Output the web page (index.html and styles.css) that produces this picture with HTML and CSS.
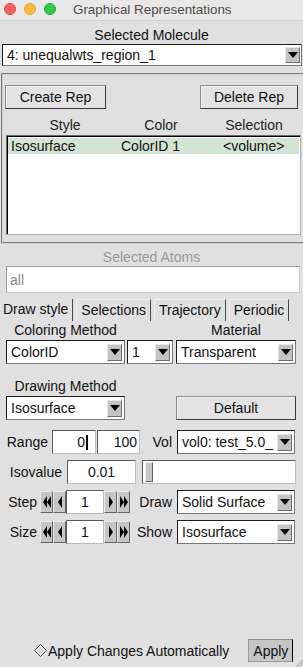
FILE: index.html
```html
<!DOCTYPE html>
<html lang="en">
<head>
    <meta charset="UTF-8">
    <meta name="viewport" content="width=device-width, initial-scale=1.0">
    <title>Graphical Representations</title>
    <link rel="stylesheet" href="styles.css">
</head>
<body>
    <div class="titlebar">
        <span class="light red"></span>
        <span class="light yellow"></span>
        <span class="light green"></span>
        <span class="title">Graphical Representations</span>
    </div>

    <div class="label mol-label">Selected Molecule</div>
    <div class="menu mol-menu">
        <span class="menu-text">4: unequalwts_region_1</span>
        <span class="arrow"><svg width="10" height="6" viewBox="0 0 10 6"><path d="M0 0h10L5 6z"/></svg></span>
    </div>

    <div class="reps">
        <div class="rep-buttons">
            <div class="btn create-btn">Create Rep</div>
            <div class="btn delete-btn">Delete Rep</div>
        </div>
        <div class="rep-head">
            <span>Style</span>
            <span>Color</span>
            <span class="col-sel">Selection</span>
        </div>
        <div class="rep-list">
            <div class="rep-row selected">
                <span>Isosurface</span>
                <span>ColorID 1</span>
                <span class="col-sel">&lt;volume&gt;</span>
            </div>
        </div>
    </div>

    <div class="label dim atoms-label">Selected Atoms</div>
    <div class="entry atoms-entry">all</div>

    <div class="tabs">
        <div class="tab active">Draw style</div>
        <div class="tab">Selections</div>
        <div class="tab">Trajectory</div>
        <div class="tab">Periodic</div>
    </div>

    <div class="draw-style">
        <div class="grid-row labels-row">
            <span class="col-a">Coloring Method</span>
            <span class="col-b"></span>
            <span class="col-c">Material</span>
        </div>
        <div class="grid-row">
            <div class="menu col-a"><span class="menu-text">ColorID</span><span class="arrow"><svg width="10" height="6" viewBox="0 0 10 6"><path d="M0 0h10L5 6z"/></svg></span></div>
            <div class="menu col-b"><span class="menu-text">1</span><span class="arrow"><svg width="10" height="6" viewBox="0 0 10 6"><path d="M0 0h10L5 6z"/></svg></span></div>
            <div class="menu col-c"><span class="menu-text">Transparent</span><span class="arrow"><svg width="10" height="6" viewBox="0 0 10 6"><path d="M0 0h10L5 6z"/></svg></span></div>
        </div>
        <div class="grid-row labels-row method-label">
            <span class="col-a">Drawing Method</span>
        </div>
        <div class="grid-row">
            <div class="menu col-a"><span class="menu-text">Isosurface</span><span class="arrow"><svg width="10" height="6" viewBox="0 0 10 6"><path d="M0 0h10L5 6z"/></svg></span></div>
            <span class="col-b"></span>
            <div class="btn col-c default-btn">Default</div>
        </div>

        <div class="param-row range-row">
            <span class="lbl range-lbl">Range</span>
            <div class="entry range-min">0<span class="cursor"></span></div>
            <div class="entry range-max">100</div>
            <div class="right-part">
                <span class="side-lbl">Vol</span>
                <div class="menu side-menu"><span class="menu-text">vol0: test_5.0_</span><span class="arrow"><svg width="10" height="6" viewBox="0 0 10 6"><path d="M0 0h10L5 6z"/></svg></span></div>
            </div>
        </div>
        <div class="param-row iso-row">
            <span class="lbl iso-lbl">Isovalue</span>
            <div class="entry iso-entry">0.01</div>
            <div class="slider"><span class="handle"></span></div>
        </div>
        <div class="param-row step-row">
            <span class="lbl step-lbl">Step</span>
            <div class="spin">
                <span class="spin-btn"><svg width="8" height="12" viewBox="0 0 8 12"><path d="M4 0v12L0 6z M8 0v12L4 6z"/></svg></span>
                <span class="spin-btn"><svg width="4" height="12" viewBox="0 0 4 12"><path d="M4 0v12L0 6z"/></svg></span>
                <div class="entry spin-entry">1</div>
                <span class="spin-btn"><svg width="4" height="12" viewBox="0 0 4 12"><path d="M0 0v12L4 6z"/></svg></span>
                <span class="spin-btn"><svg width="8" height="12" viewBox="0 0 8 12"><path d="M0 0v12L4 6z M4 0v12L8 6z"/></svg></span>
            </div>
            <div class="right-part">
                <span class="side-lbl">Draw</span>
                <div class="menu side-menu"><span class="menu-text">Solid Surface</span><span class="arrow"><svg width="10" height="6" viewBox="0 0 10 6"><path d="M0 0h10L5 6z"/></svg></span></div>
            </div>
        </div>
        <div class="param-row size-row">
            <span class="lbl step-lbl">Size</span>
            <div class="spin">
                <span class="spin-btn"><svg width="8" height="12" viewBox="0 0 8 12"><path d="M4 0v12L0 6z M8 0v12L4 6z"/></svg></span>
                <span class="spin-btn"><svg width="4" height="12" viewBox="0 0 4 12"><path d="M4 0v12L0 6z"/></svg></span>
                <div class="entry spin-entry">1</div>
                <span class="spin-btn"><svg width="4" height="12" viewBox="0 0 4 12"><path d="M0 0v12L4 6z"/></svg></span>
                <span class="spin-btn"><svg width="8" height="12" viewBox="0 0 8 12"><path d="M0 0v12L4 6z M4 0v12L8 6z"/></svg></span>
            </div>
            <div class="right-part">
                <span class="side-lbl">Show</span>
                <div class="menu side-menu"><span class="menu-text">Isosurface</span><span class="arrow"><svg width="10" height="6" viewBox="0 0 10 6"><path d="M0 0h10L5 6z"/></svg></span></div>
            </div>
        </div>
    </div>

    <div class="footer">
        <span class="radio"><svg width="13" height="13" viewBox="0 0 13 13"><path d="M6.5 0.5L12.5 6.5L6.5 12.5L0.5 6.5z" fill="#f6f6f6" stroke="#3a3a3a"/><path d="M6.5 3L10 6.5L6.5 10L3 6.5z" fill="#d8d8d8"/></svg></span>
        <span class="auto-text">Apply Changes Automatically</span>
        <div class="btn apply-btn">Apply</div>
    </div>
    <svg class="grip" width="8" height="8" viewBox="0 0 8 8"><path d="M8 1L1 8M8 4L4 8" stroke="#999" fill="none"/></svg>
</body>
</html>
```

FILE: styles.css
```css
body {
    margin: 0;
    width: 303px;
    height: 667px;
    overflow: hidden;
    position: relative;
    display: flex;
    flex-direction: column;
    background-color: #e0e0e0;
    font-family: "Liberation Sans", Arial, sans-serif;
    font-size: 14px;
    color: #111;
}
.titlebar {
    height: 20px;
    flex-shrink: 0;
    display: flex;
    align-items: center;
    padding-left: 4px;
    background-color: #e8e8e8;
    border-bottom: 1px solid #d2d2d2;
}
.light {
    width: 12px;
    height: 12px;
    box-sizing: border-box;
    border-radius: 50%;
    margin-right: 8px;
    margin-top: -2px;
}
.red {
    background-color: #fc605c;
    border: 1px solid #de4a45;
}
.yellow {
    background-color: #fdbc40;
    border: 1px solid #dea236;
}
.green {
    background-color: #34c84a;
    border: 1px solid #27aa35;
}
.title {
    margin-left: 9px;
    margin-top: -2px;
    font-size: 13.4px;
    color: #4d4d4d;
}
.label {
    text-align: center;
    line-height: 16px;
}
.dim {
    color: #999;
}
.mol-label {
    margin-top: 6px;
}

/* option menus */
.menu {
    display: flex;
    align-items: center;
    height: 24px;
    box-sizing: border-box;
    background-color: #fff;
    border: 1px solid #1c1c1c;
    border-right-color: #777;
    border-bottom-color: #777;
}
.menu-text {
    flex: 1;
    padding-left: 4px;
    white-space: nowrap;
    overflow: hidden;
}
.arrow {
    width: 15px;
    height: 17px;
    box-sizing: border-box;
    margin-right: 2px;
    display: flex;
    align-items: center;
    justify-content: center;
    background-color: #c3c3c3;
    border: 1px solid #e6e6e6;
    border-right-color: #6e6e6e;
    border-bottom-color: #6e6e6e;
}
.arrow svg {
    fill: #000;
}
.mol-menu {
    margin: 1px 1px 0 2px;
    height: 22px;
}
.mol-menu .arrow {
    height: 16px;
    margin-right: 1px;
}

/* buttons */
.btn {
    box-sizing: border-box;
    height: 24px;
    display: flex;
    align-items: center;
    justify-content: center;
    background-color: #e3e3e3;
    border: 1px solid #8c8c8c;
    border-right-color: #3a3a3a;
    border-bottom-color: #3a3a3a;
    box-shadow: inset 1px 1px #f4f4f4;
}

/* representations frame */
.reps {
    margin: 7px 0 0 1px;
    border: 2px groove #cfcfcf;
    border-right: none;
    padding: 10px 0 7px 2px;
}
.rep-buttons {
    display: flex;
    justify-content: space-between;
    padding-right: 5px;
}
.create-btn {
    width: 101px;
}
.delete-btn {
    width: 98px;
}
.rep-head,
.rep-row {
    display: grid;
    grid-template-columns: 114px 78px 102px;
    line-height: 16px;
}
.rep-head {
    margin: 8px 0 0 3px;
    padding-bottom: 2px;
    text-align: center;
    color: #222;
}
.rep-head .col-sel {
    padding-left: 6px;
}
.rep-list {
    margin-left: 1px;
    width: 295px;
    height: 100px;
    box-sizing: border-box;
    background-color: #fff;
    border: 1px solid #6a6a6a;
    border-right-color: #b4b4b4;
    border-bottom-color: #b4b4b4;
    box-shadow: inset 1px 1px #000;
    padding: 2px 1px 0 1px;
}
.rep-row {
    grid-template-columns: 113px 102px 78px;
}
.rep-row span:first-child {
    padding-left: 3px;
}
.rep-row .col-sel {
    padding-left: 0;
}
.selected {
    background-color: #d4e4d4;
}

/* entries */
.entry {
    box-sizing: border-box;
    height: 24px;
    display: flex;
    align-items: center;
    background-color: #fff;
    border: 1px solid #5a5a5a;
    border-right-color: #bcbcbc;
    border-bottom-color: #bcbcbc;
}
.atoms-label {
    margin-top: 5px;
}
.atoms-entry {
    margin: 1px 3px 0 6px;
    height: 27px;
    padding-left: 3px;
    color: #888;
    border-color: #9a9a9a;
    border-right-color: #c8c8c8;
    border-bottom-color: #c8c8c8;
}

/* notebook tabs */
.tabs {
    display: flex;
    margin-top: 6px;
    height: 22px;
}
.tab {
    box-sizing: border-box;
    height: 22px;
    display: flex;
    align-items: center;
    padding: 0 4px 2px;
    border-top: 1px solid #f2f2f2;
    border-left: 1px solid #f2f2f2;
    border-right: 1px solid #4a4a4a;
    margin-right: 3px;
}
.tab.active {
    border-top: none;
    border-left: none;
    padding-left: 3px;
}

/* draw style page */
.draw-style {
    display: flex;
    flex-direction: column;
}
.grid-row {
    display: flex;
    align-items: center;
    padding-left: 6px;
}
.col-a {
    width: 119px;
    margin-right: 2px;
}
.col-b {
    width: 46px;
    margin-right: 3px;
}
.col-c {
    width: 120px;
}
.labels-row {
    line-height: 16px;
    text-align: center;
    margin-top: 1px;
    margin-bottom: 2px;
}
.labels-row span {
    display: block;
}
.method-label {
    margin-top: 14px;
}

.param-row {
    display: flex;
    align-items: center;
    height: 24px;
}
.lbl {
    text-align: right;
}
.range-row {
    margin-top: 10px;
}
.range-lbl {
    width: 48px;
    margin-right: 4px;
}
.range-min {
    width: 44px;
    justify-content: flex-end;
    padding-right: 7px;
    margin-right: 1px;
}
.cursor {
    width: 2px;
    height: 15px;
    margin-left: 1px;
    background-color: #000;
}
.range-max {
    width: 43px;
    justify-content: flex-end;
    padding-right: 2px;
}
.right-part {
    margin-left: auto;
    margin-right: 8px;
    display: flex;
    align-items: center;
}
.side-lbl {
    margin-right: 5px;
}
.side-menu {
    width: 118px;
}
.iso-row {
    margin-top: 6px;
}
.iso-lbl {
    width: 62px;
    margin-right: 5px;
}
.iso-entry {
    width: 69px;
    justify-content: center;
}
.slider {
    margin-left: auto;
    margin-right: 7px;
    width: 154px;
    height: 24px;
    box-sizing: border-box;
    background-color: #fff;
    border: 1px solid #5a5a5a;
    border-right-color: #bcbcbc;
    border-bottom-color: #bcbcbc;
    padding: 1px 0 1px 2px;
    display: flex;
}
.handle {
    width: 8px;
    box-sizing: border-box;
    background-color: #c6c6c6;
    border: 1px solid #eee;
    border-right-color: #666;
    border-bottom-color: #666;
}
.step-row {
    margin-top: 6px;
}
.size-row {
    margin-top: 6px;
}
.step-lbl {
    width: 37px;
    margin-right: 3px;
}
.spin {
    display: flex;
    align-items: center;
}
.spin-btn {
    width: 13px;
    height: 22px;
    box-sizing: border-box;
    display: flex;
    align-items: center;
    justify-content: center;
    background-color: #c6c6c6;
    border: 1px solid #eaeaea;
    border-right-color: #666;
    border-bottom-color: #666;
}
.spin-btn svg {
    fill: #000;
}
.spin-entry {
    width: 38px;
    justify-content: center;
}

/* bottom bar */
.footer {
    margin-top: auto;
    margin-bottom: 5px;
    display: flex;
    align-items: center;
    padding-left: 34px;
}
.radio {
    display: flex;
    margin-right: 1px;
}
.auto-text {
    margin-right: 19px;
}
.apply-btn {
    width: 45px;
    height: 23px;
    background-color: #c6c6c6;
    box-shadow: none;
    border-color: #9a9a9a;
    border-right-color: #000;
    border-top-color: #8a8a8a;
}
.grip {
    position: absolute;
    right: 0;
    bottom: 0;
}
```
